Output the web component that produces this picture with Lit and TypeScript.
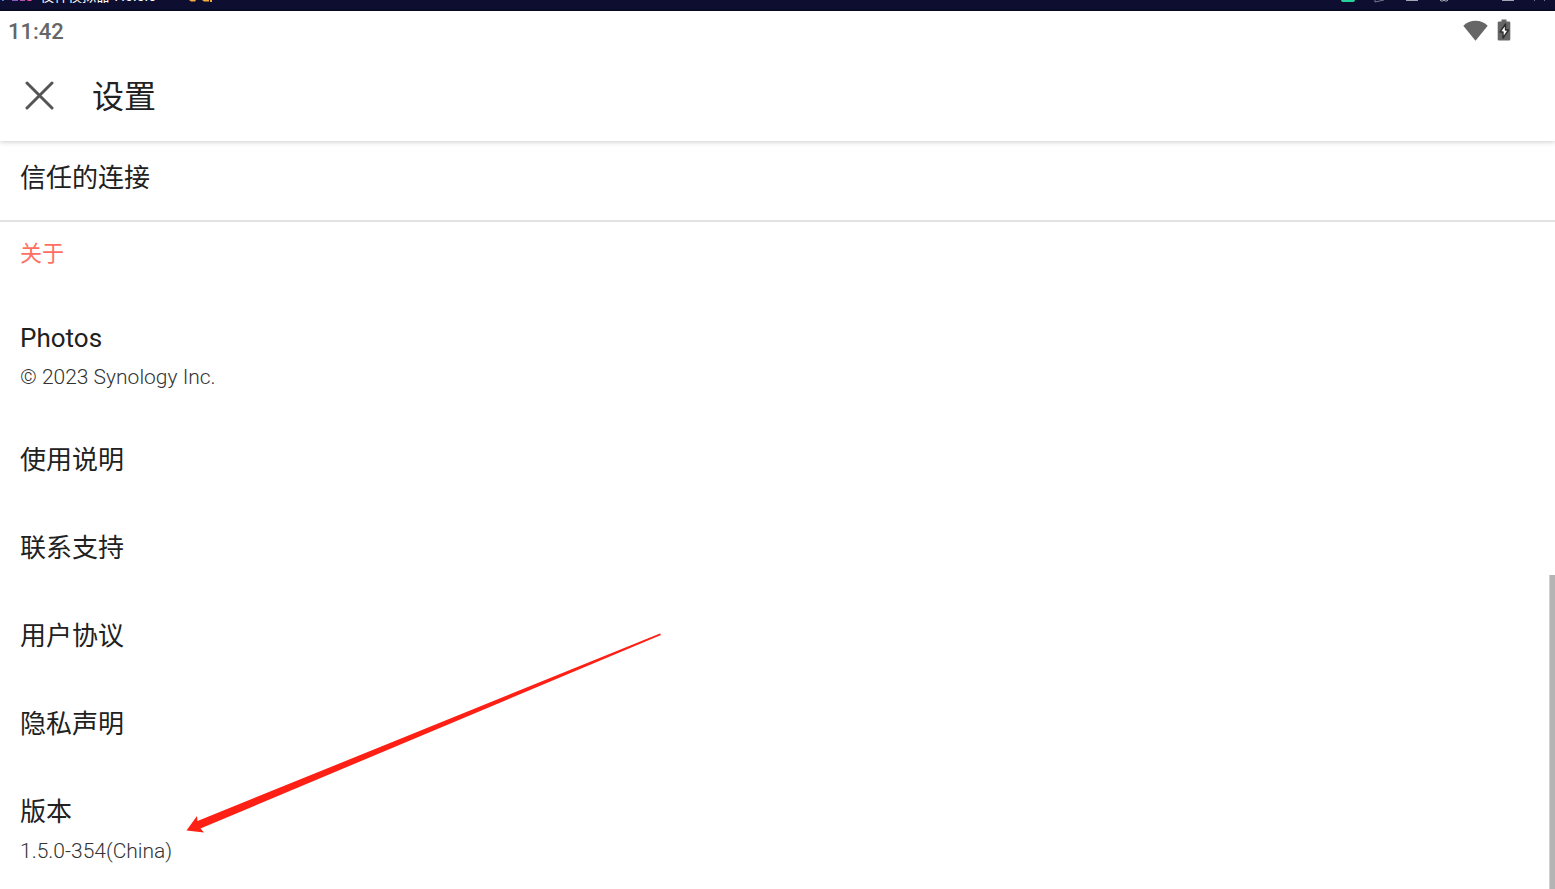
import { LitElement, html, css, svg, nothing } from "lit";
import { customElement, property } from "lit/decorators.js";

interface Entry {
  title: string;
  detail?: string;
}

const ABOUT: Entry[] = [
  { title: "Photos", detail: "© 2023 Synology Inc." },
  { title: "使用说明" },
  { title: "联系支持" },
  { title: "用户协议" },
  { title: "隐私声明" },
  { title: "版本", detail: "1.5.0-354(China)" },
];

/** Lower edge of the emulator's window frame. */
@customElement("window-strip")
class WindowStrip extends LitElement {
  static styles = css`
    :host {
      display: flex;
      align-items: flex-end;
      justify-content: space-between;
      height: 11px;
      overflow: hidden;
      background: linear-gradient(#0e0f30 9px, #06061c 11px);
    }
    .title {
      display: flex;
      align-items: flex-end;
      height: 11px;
    }
    .name {
      height: 11px;
      padding-right: 33px;
      font: 14px/14px Roboto, "Noto Sans CJK SC", sans-serif;
      color: #fff;
      white-space: nowrap;
      display: flex;
      flex-direction: column;
      justify-content: flex-end;
      padding-bottom: 8px;
      box-sizing: border-box;
    }
    svg {
      display: block;
      flex: none;
    }
  `;

  render() {
    return html`
      <div class="title">
        <svg width="40" height="11" viewBox="0 0 40 11" aria-hidden="true">
          <path d="M2 0h2v1H2z" fill="#3f7df0" />
          <path d="M12 0h6v1h-6z" fill="#8a55c8" />
          <path d="M20 0h5v1h-5z" fill="#b254b8" />
          <path d="M27 0h5l-1 1h-3z" fill="#ee4f9d" />
        </svg>
        <span class="name">夜神模拟器 7.0.5.6</span>
        <svg width="26" height="11" viewBox="0 0 26 11" aria-hidden="true">
          <path d="M0 0h7l-1 1.500H2z M13 0h7v1.500h-5z M21 0h2v2h-2z" fill="#f2ab3c" />
        </svg>
      </div>
      <svg width="215" height="11" viewBox="0 0 215 11" aria-hidden="true">
        <path d="M1 0h14q0 2-2 2H3Q1 2 1 0z" fill="#27d19b" />
        <path d="M35 0v2l9-2" fill="none" stroke="#777991" />
        <path d="M66 0h12v1H66zM162 0h12v1h-12z" fill="#a3a5b4" />
        <path d="M100 0l1 1h2l1-1 1 1h2l1-1" fill="none" stroke="#a3a5b4" />
        <path d="M194 1l1-1M204 0l1 1" stroke="#777991" />
      </svg>
    `;
  }
}

@customElement("status-bar")
class StatusBar extends LitElement {
  static styles = css`
    :host {
      display: flex;
      align-items: flex-start;
      justify-content: space-between;
      height: 40px;
      padding: 0 44px 0 8px;
      color: #666;
      font: 500 22px/42px Roboto, sans-serif;
    }
    .icons {
      display: flex;
      align-items: center;
      gap: 9px;
      height: 38px;
    }
    svg {
      display: block;
    }
  `;

  render() {
    return html`
      <time>11:42</time>
      <div class="icons">
        <svg width="25" height="21" viewBox="0 0 25 21" role="img" aria-label="Wi-Fi">
          <path d="M0.300 5.800Q5.500 0.800 12.500 0.800T24.700 5.800L12.500 20.800z" fill="#666" />
        </svg>
        <svg width="14" height="22" viewBox="0 0 14 22" role="img" aria-label="充电中">
          <path d="M4.500 0.500h5v2H12q1.300 0 1.300 1.300v16.400q0 1.300-1.300 1.300H2q-1.300 0-1.300-1.300V3.800Q.7 2.500 2 2.500h2.500z" fill="#666" />
          <path d="M8.500 5L3 13h3v6l5.500-8H8.500z" fill="#fff" stroke="#2e2e2e" stroke-width="1.400" stroke-linejoin="round" />
        </svg>
      </div>
    `;
  }
}

@customElement("setting-row")
class SettingRow extends LitElement {
  static styles = css`
    :host {
      display: block;
      font-family: Roboto, "Noto Sans CJK SC", sans-serif;
    }
    .row {
      display: flex;
      flex-direction: column;
      gap: 8px;
      width: 100%;
      padding: 28px 20px;
      border: 0;
      background: none;
      font: inherit;
      text-align: left;
    }
    .double {
      padding-bottom: 24px;
    }
    .title {
      font-size: 26px;
      line-height: 32px;
      color: #212121;
    }
    .detail {
      font-size: 21px;
      line-height: 30px;
      font-weight: 300;
      color: #333;
    }
  `;

  @property() heading = "";
  @property() detail = "";

  render() {
    return html`
      <button class="row ${this.detail ? "double" : ""}" type="button">
        <span class="title">${this.heading}</span>
        ${this.detail ? html`<span class="detail">${this.detail}</span>` : nothing}
      </button>
    `;
  }
}

@customElement("app-root")
class AppRoot extends LitElement {
  static styles = css`
    :host {
      display: flex;
      flex-direction: column;
      position: relative;
      height: 100vh;
      overflow: hidden;
      background: #fff;
      font-family: Roboto, "Noto Sans CJK SC", sans-serif;
    }
    header {
      display: flex;
      align-items: center;
      flex: none;
      gap: 37px;
      height: 90px;
      padding-left: 24px;
      background: #fff;
      box-shadow: 0 1px 5px rgba(0, 0, 0, 0.2);
      clip-path: inset(0 0 -10px 0);
      z-index: 1;
    }
    .close {
      padding: 0;
      border: 0;
      background: none;
    }
    .close svg {
      display: block;
    }
    h1 {
      margin: 0;
      padding-top: 2px;
      font-size: 32px;
      line-height: 40px;
      font-weight: 400;
      color: #212121;
    }
    main {
      display: flex;
      flex-direction: column;
      flex: 1;
      min-height: 0;
      overflow: hidden;
    }
    .trusted {
      flex: none;
      height: 81px;
      display: flex;
      flex-direction: column;
      justify-content: flex-end;
      box-shadow: inset 0 -2px #e2e2e2;
    }
    h2 {
      flex: none;
      margin: 0;
      padding: 16px 20px 24px;
      font-size: 22px;
      line-height: 32px;
      font-weight: 400;
      color: #ff6f61;
    }
    setting-row {
      flex: none;
    }
    .thumb {
      position: absolute;
      right: 0;
      bottom: 0;
      width: 5px;
      height: 314px;
      background: #b4b4b4;
      border-left: 1px solid #d0d0d0;
    }
    .arrow {
      position: absolute;
      left: 186px;
      top: 633px;
      pointer-events: none;
      z-index: 2;
    }
  `;

  render() {
    return html`
      <window-strip></window-strip>
      <status-bar></status-bar>
      <header>
        <button class="close" type="button" aria-label="关闭">
          <svg width="31" height="31" viewBox="0 0 31 31" aria-hidden="true">
            <path d="M3 2L28 27M28 2L3 27" fill="none" stroke="#555" stroke-width="3" stroke-linecap="round" />
          </svg>
        </button>
        <h1>设置</h1>
      </header>
      <main>
        <div class="trusted"><setting-row heading="信任的连接"></setting-row></div>
        <h2>关于</h2>
        ${ABOUT.map(
          (e) => html`<setting-row .heading=${e.title} .detail=${e.detail ?? ""}></setting-row>`
        )}
      </main>
      <div class="thumb"></div>
      <svg class="arrow" width="476" height="202" viewBox="0 0 476 202" aria-hidden="true">
        ${svg`<path d="M0.500 197.500L11 183L11.500 188L474 0.500L475 2L14.500 195.500L18 199.500z" fill="#ff2015" />`}
      </svg>
    `;
  }
}
